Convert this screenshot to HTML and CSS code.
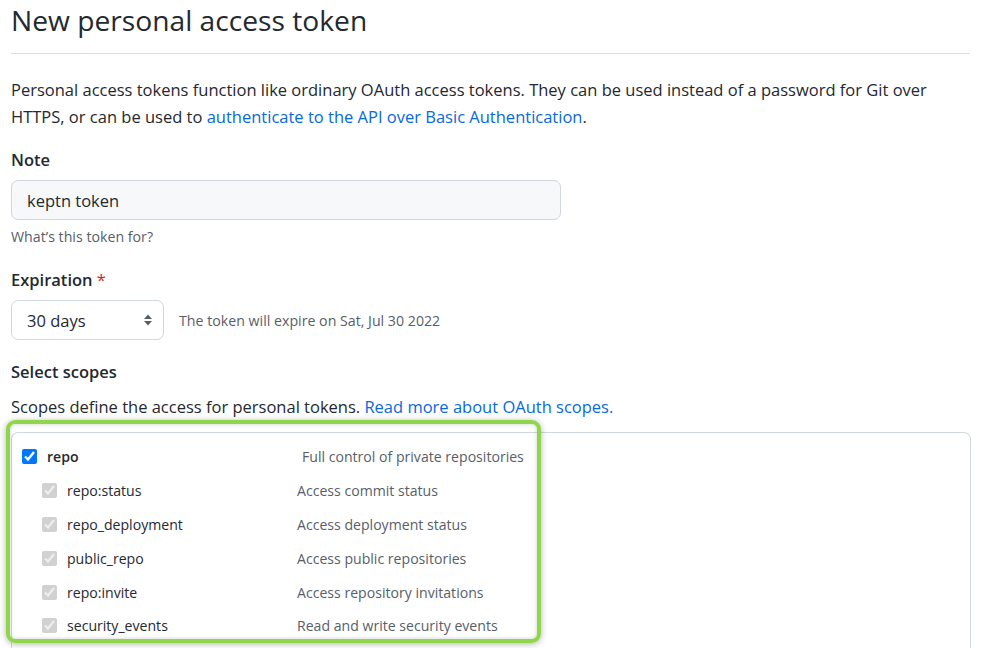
FILE: index.html
```html
<!DOCTYPE html>
<html lang="en">
<head>
<meta charset="utf-8">
<title>New personal access token</title>
<link rel="stylesheet" href="styles.css">
</head>
<body>
<main class="page">
  <h1 class="title">New personal access token</h1>
  <p class="intro"><span>Personal access tokens function like ordinary OAuth access tokens. They can be used instead of a password for Git over</span><br><span>HTTPS, or can be used to</span> <a href="#" class="link">authenticate to the API over Basic Authentication</a>.</p>

  <div class="field note-field">
    <label class="label" for="note">Note</label>
    <input id="note" class="input" type="text" value="keptn token">
    <p class="hint">What’s this token for?</p>
  </div>

  <div class="field exp-field">
    <label class="label" for="exp">Expiration <span class="req">*</span></label>
    <div class="exp-row">
      <div class="select">
        <span class="select-value">30 days</span>
        <svg class="select-arrows" width="10" height="16" viewBox="0 0 10 16" aria-hidden="true">
          <path d="M5 2.5 L9 7 L1 7 Z" fill="#57606a"/>
          <path d="M5 13.5 L9 9 L1 9 Z" fill="#57606a"/>
        </svg>
      </div>
      <span class="exp-note">The token will expire on Sat, Jul 30 2022</span>
    </div>
  </div>

  <div class="field scopes-field">
    <h2 class="label">Select scopes</h2>
    <p class="scopes-desc">Scopes define the access for personal tokens. <a href="#" class="link">Read more about OAuth scopes.</a></p>
  </div>

  <div class="scopes-wrap">
    <div class="scopes-box">
      <div class="scope-row top">
        <label class="scope-name"><input type="checkbox" class="cb" checked><span class="strong">repo</span></label>
        <span class="scope-desc">Full control of private repositories</span>
      </div>
      <div class="sub-list">
        <div class="scope-row">
          <label class="scope-name"><input type="checkbox" class="cb" checked disabled><span>repo:status</span></label>
          <span class="scope-desc">Access commit status</span>
        </div>
        <div class="scope-row">
          <label class="scope-name"><input type="checkbox" class="cb" checked disabled><span>repo_deployment</span></label>
          <span class="scope-desc">Access deployment status</span>
        </div>
        <div class="scope-row">
          <label class="scope-name"><input type="checkbox" class="cb" checked disabled><span>public_repo</span></label>
          <span class="scope-desc">Access public repositories</span>
        </div>
        <div class="scope-row">
          <label class="scope-name"><input type="checkbox" class="cb" checked disabled><span>repo:invite</span></label>
          <span class="scope-desc">Access repository invitations</span>
        </div>
        <div class="scope-row">
          <label class="scope-name"><input type="checkbox" class="cb" checked disabled><span>security_events</span></label>
          <span class="scope-desc">Read and write security events</span>
        </div>
      </div>
    </div>
    <div class="highlight" aria-hidden="true"></div>
  </div>
</main>
</body>
</html>
```

FILE: styles.css
```css
* { box-sizing: border-box; }

html, body {
  margin: 0;
  padding: 0;
  background: #ffffff;
  overflow: hidden;
}

body {
  font-family: "Open Sans", "Noto Sans", "Liberation Sans", sans-serif;
  color: #24292f;
  font-size: 17px;
}

.page {
  padding: 0 15px 0 11px;
  width: 985px;
}

.title {
  margin: 0;
  font-size: 28.2px;
  font-weight: 400;
  line-height: 40px;
  padding-bottom: 13px;
  border-bottom: 1px solid #d8dee4;
}

.intro {
  margin: 22px 0 0;
  font-size: 16.5px;
  line-height: 27px;
}

.link {
  color: #0969da;
  text-decoration: none;
}

.label {
  display: block;
  margin: 0;
  font-size: 16.5px;
  font-weight: 600;
  line-height: 24px;
}

.note-field { margin-top: 18px; }

.input {
  display: block;
  margin-top: 8px;
  width: 550px;
  height: 40px;
  padding: 0 15px;
  background: #f6f8fa;
  border: 1px solid #d0d7de;
  border-radius: 7px;
  font-family: inherit;
  font-size: 16.5px;
  color: #24292f;
  outline: none;
}

.hint {
  margin: 7px 0 0;
  font-size: 14.2px;
  line-height: 20px;
  color: #57606a;
}

.exp-field { margin-top: 21px; }

.req { color: #cf222e; font-weight: 400; }

.exp-row {
  display: flex;
  align-items: center;
  gap: 15px;
  margin-top: 8px;
}

.select {
  display: flex;
  align-items: center;
  justify-content: space-between;
  width: 153px;
  height: 40px;
  padding: 0 10px 0 15px;
  border: 1px solid #d0d7de;
  border-radius: 7px;
  background: #ffffff;
  font-size: 16.5px;
}

.exp-note {
  font-size: 14.2px;
  color: #57606a;
}

.scopes-field { margin-top: 20px; }

.scopes-desc {
  margin: 9px 0 0;
  font-size: 16.5px;
  line-height: 27px;
}

.scopes-wrap {
  position: relative;
  margin-top: 12px;
}

.scopes-box {
  width: 960px;
  height: 216px;
  border: 1px solid #d0d7de;
  border-bottom: 0;
  border-radius: 7px 7px 0 0;
  padding: 6px 0 0 10px;
}

.scope-row {
  display: flex;
  align-items: center;
  height: 34px;
  font-size: 14.1px;
}

.sub-list .scope-row:last-child { height: 33px; }

.scope-name {
  display: flex;
  align-items: center;
  gap: 10px;
  width: 280px;
  flex-shrink: 0;
}

.sub-list { padding-left: 20px; }

.sub-list .scope-name { width: 255px; }

.cb {
  width: 15px;
  height: 15px;
  margin: 0;
  flex-shrink: 0;
}

.strong { font-weight: 600; }

.scope-desc { color: #57606a; }

.highlight {
  position: absolute;
  left: -5px;
  top: -12px;
  width: 535px;
  height: 223px;
  border: 4px solid #8fd64a;
  border-radius: 9px;
  box-shadow: 0 1px 6px rgba(0, 0, 0, 0.3), inset 0 0 4px rgba(0, 0, 0, 0.2);
  pointer-events: none;
}
```
